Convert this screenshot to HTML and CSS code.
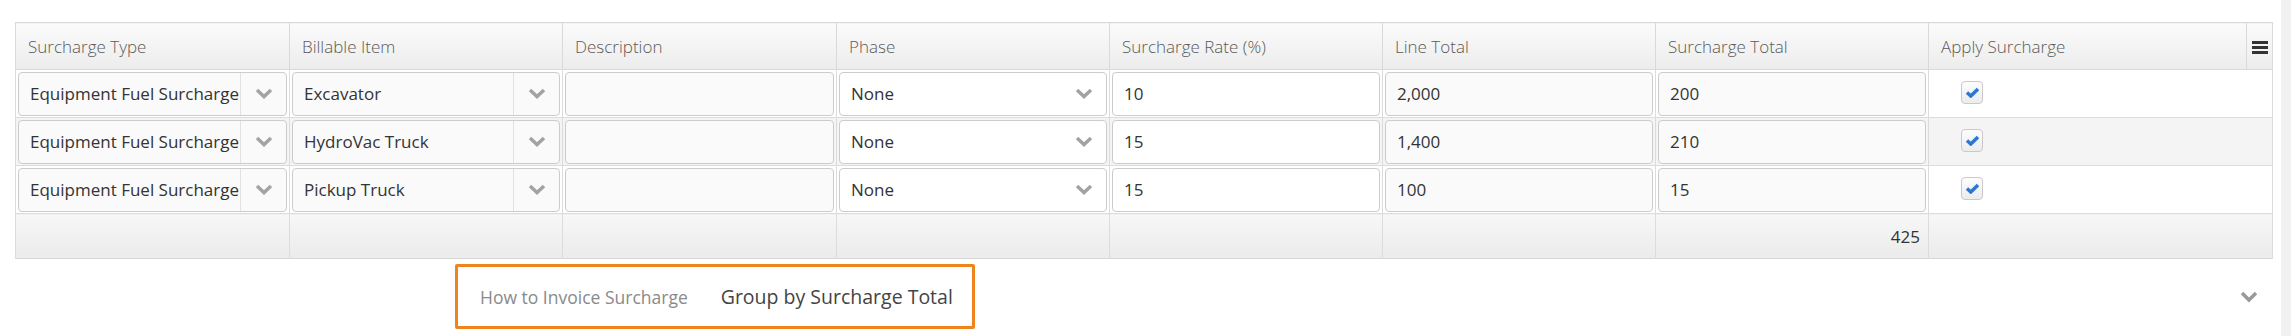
FILE: index.html
```html
<!DOCTYPE html>
<html lang="en">
<head>
    <meta charset="UTF-8">
    <title>Surcharges</title>
    <link rel="stylesheet" href="styles.css">
</head>
<body>
<div class="page">
    <div class="content">
        <table class="grid">
            <colgroup>
                <col style="width:274px"><col style="width:273px"><col style="width:274px">
                <col style="width:273px"><col style="width:273px"><col style="width:273px">
                <col style="width:273px"><col style="width:318px"><col style="width:26px">
            </colgroup>
            <thead>
                <tr>
                    <th>Surcharge Type</th>
                    <th>Billable Item</th>
                    <th>Description</th>
                    <th>Phase</th>
                    <th>Surcharge Rate (%)</th>
                    <th>Line Total</th>
                    <th>Surcharge Total</th>
                    <th>Apply Surcharge</th>
                    <th class="menu-cell"><span class="hamburger"><i></i><i></i><i></i></span></th>
                </tr>
            </thead>
            <tbody>
                <tr>
                    <td><div class="field combo"><span class="val">Equipment Fuel Surcharge</span><span class="combo-btn"><svg width="18" height="11" viewBox="0 0 18 11"><polyline points="2,2 9,8.5 16,2"/></svg></span></div></td>
                    <td><div class="field combo"><span class="val">Excavator</span><span class="combo-btn"><svg width="18" height="11" viewBox="0 0 18 11"><polyline points="2,2 9,8.5 16,2"/></svg></span></div></td>
                    <td><div class="field"></div></td>
                    <td><div class="field select"><span class="val">None</span><svg width="18" height="11" viewBox="0 0 18 11"><polyline points="2,2 9,8.5 16,2"/></svg></div></td>
                    <td><div class="field editable"><span class="val">10</span></div></td>
                    <td><div class="field"><span class="val">2,000</span></div></td>
                    <td><div class="field"><span class="val">200</span></div></td>
                    <td colspan="2" class="check-cell"><span class="checkbox"><svg width="15" height="11" viewBox="0 0 15 11"><polyline points="2,5.5 5.8,9 13,2"/></svg></span></td>
                </tr>
                <tr class="alt">
                    <td><div class="field combo"><span class="val">Equipment Fuel Surcharge</span><span class="combo-btn"><svg width="18" height="11" viewBox="0 0 18 11"><polyline points="2,2 9,8.5 16,2"/></svg></span></div></td>
                    <td><div class="field combo"><span class="val">HydroVac Truck</span><span class="combo-btn"><svg width="18" height="11" viewBox="0 0 18 11"><polyline points="2,2 9,8.5 16,2"/></svg></span></div></td>
                    <td><div class="field"></div></td>
                    <td><div class="field select"><span class="val">None</span><svg width="18" height="11" viewBox="0 0 18 11"><polyline points="2,2 9,8.5 16,2"/></svg></div></td>
                    <td><div class="field editable"><span class="val">15</span></div></td>
                    <td><div class="field"><span class="val">1,400</span></div></td>
                    <td><div class="field"><span class="val">210</span></div></td>
                    <td colspan="2" class="check-cell"><span class="checkbox"><svg width="15" height="11" viewBox="0 0 15 11"><polyline points="2,5.5 5.8,9 13,2"/></svg></span></td>
                </tr>
                <tr>
                    <td><div class="field combo"><span class="val">Equipment Fuel Surcharge</span><span class="combo-btn"><svg width="18" height="11" viewBox="0 0 18 11"><polyline points="2,2 9,8.5 16,2"/></svg></span></div></td>
                    <td><div class="field combo"><span class="val">Pickup Truck</span><span class="combo-btn"><svg width="18" height="11" viewBox="0 0 18 11"><polyline points="2,2 9,8.5 16,2"/></svg></span></div></td>
                    <td><div class="field"></div></td>
                    <td><div class="field select"><span class="val">None</span><svg width="18" height="11" viewBox="0 0 18 11"><polyline points="2,2 9,8.5 16,2"/></svg></div></td>
                    <td><div class="field editable"><span class="val">15</span></div></td>
                    <td><div class="field"><span class="val">100</span></div></td>
                    <td><div class="field"><span class="val">15</span></div></td>
                    <td colspan="2" class="check-cell"><span class="checkbox"><svg width="15" height="11" viewBox="0 0 15 11"><polyline points="2,5.5 5.8,9 13,2"/></svg></span></td>
                </tr>
            </tbody>
            <tfoot>
                <tr>
                    <td></td><td></td><td></td><td></td><td></td><td></td>
                    <td class="sum">425</td>
                    <td colspan="2"></td>
                </tr>
            </tfoot>
        </table>

        <div class="invoice-row">
            <div class="invoice-box">
                <span class="invoice-label">How to Invoice Surcharge</span>
                <span class="invoice-value">Group by Surcharge Total</span>
            </div>
            <span class="collapse-toggle"><svg width="20" height="12" viewBox="0 0 20 12"><polyline points="3,2 10,9 17,2"/></svg></span>
        </div>
    </div>
    <div class="scroll-track"></div>
</div>
</body>
</html>
```

FILE: styles.css
```css
body {
    margin: 0;
    background: #fff;
    font-family: "Open Sans", "Liberation Sans", sans-serif;
    color: #333;
}
.page {
    display: flex;
    height: 336px;
    overflow: hidden;
}
.content {
    flex: 1;
    padding: 22px 8px 0 15px;
}
.scroll-track {
    width: 11px;
    background-color: #f1f1f1;
}

/* grid */
.grid {
    width: 2257px;
    table-layout: fixed;
    border-collapse: collapse;
    border: 1px solid #d6d6d6;
}
.grid th {
    height: 46px;
    padding: 0 12px;
    text-align: left;
    font-weight: 300;
    font-size: 17px;
    color: #5a5a5a;
    background: linear-gradient(#fbfbfb, #ececec);
    border: 1px solid #d9d9d9;
    white-space: nowrap;
    overflow: hidden;
}
.grid th.menu-cell {
    padding: 0;
    text-align: center;
}
.hamburger {
    display: inline-flex;
    flex-direction: column;
    gap: 2px;
    vertical-align: middle;
}
.hamburger i {
    display: block;
    width: 16px;
    height: 3px;
    background-color: #333;
}
.grid td {
    height: 44px;
    padding: 1px 2px;
    border-left: 1px solid #dcdcdc;
    border-right: 1px solid #dcdcdc;
    border-bottom: 1px solid #dcdcdc;
    background-color: #fff;
    vertical-align: middle;
}
.grid tr.alt td {
    background-color: #f4f4f4;
}

.field {
    display: flex;
    align-items: center;
    height: 44px;
    box-sizing: border-box;
    border: 1px solid #cccccc;
    border-radius: 4px;
    background-color: #fafafa;
    font-size: 17px;
    color: #333;
    overflow: hidden;
}
.field .val {
    flex: 1;
    padding-left: 11px;
    white-space: nowrap;
    overflow: hidden;
}
.field.editable,
.field.select {
    background-color: #fff;
}
.field svg polyline,
.collapse-toggle svg polyline {
    fill: none;
    stroke: #a3a3a3;
    stroke-width: 3.5;
}
.field.select svg {
    margin-right: 13px;
}
.combo-btn {
    display: flex;
    align-items: center;
    justify-content: center;
    width: 45px;
    height: 100%;
    flex: none;
    border-left: 1px solid #e2e2e2;
}

.grid td.check-cell {
    padding: 0 0 3px 32px;
}
.checkbox {
    display: flex;
    align-items: center;
    justify-content: center;
    width: 22px;
    height: 23px;
    box-sizing: border-box;
    border: 1px solid #c9c9c9;
    border-radius: 4px;
    background: linear-gradient(#fdfdfd, #ececec);
}
.checkbox polyline {
    fill: none;
    stroke: #2a78d6;
    stroke-width: 3.5;
}

.grid tfoot td {
    height: 44px;
    padding: 0 8px;
    background: linear-gradient(#f7f7f7, #ebebeb);
    border-bottom: none;
}
.grid tfoot td.sum {
    text-align: right;
    font-size: 17px;
    color: #333;
}

/* below grid */
.invoice-row {
    display: flex;
    align-items: center;
    margin-top: 5px;
}
.invoice-box {
    display: flex;
    align-items: center;
    gap: 33px;
    margin-left: 440px;
    width: 520px;
    height: 65px;
    box-sizing: border-box;
    padding: 0 15px 0 22px;
    border: 3px solid #f0841c;
    border-radius: 2px;
    white-space: nowrap;
}
.invoice-label {
    font-size: 17.5px;
    color: #8a8a8a;
}
.invoice-value {
    font-size: 19.5px;
    color: #444;
}
.collapse-toggle {
    margin-left: auto;
    margin-right: 14px;
    display: flex;
}
.collapse-toggle svg polyline {
    stroke: #999;
}
```
